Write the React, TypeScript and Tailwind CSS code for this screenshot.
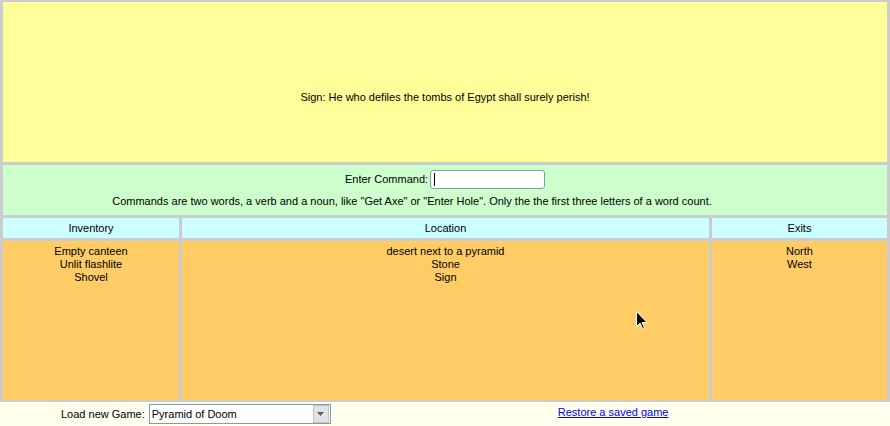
import React from 'react';

const font = { fontFamily: '"Liberation Sans", Arial, sans-serif' };

const App: React.FC = () => {
  return (
    <div className="relative w-[890px] h-[426px] bg-[#ffffee] text-[11px] leading-[13px] text-black" style={font}>
      <div className="flex flex-col gap-[3px] bg-[#cccccc] pt-[2px] pb-[2px] px-[3px]">
        <div className="h-[160px] bg-[#ffff99] flex items-center justify-center pt-[30px]">
          Sign: He who defiles the tombs of Egypt shall surely perish!
        </div>

        <div className="h-[50px] bg-[#ccffcc] flex flex-col items-center pt-[4px]">
          <div className="flex items-center gap-[2px] h-[19px] pt-[1px]">
            <span>Enter Command:</span>
            <div className="w-[115px] h-[19px] bg-white border border-[#7f9db9] rounded-[3px] flex items-center pl-[3px]">
              <div className="w-[1px] h-[13px] bg-black" />
            </div>
          </div>
          <div className="mt-[7px] mr-[66px]">
            Commands are two words, a verb and a noun, like "Get Axe" or "Enter Hole". Only the the first three letters of a word count.
          </div>
        </div>

        <div className="grid grid-cols-[176px_527px_1fr] gap-[3px] h-[20px]">
          <div className="bg-[#ccffff] flex items-center justify-center">Inventory</div>
          <div className="bg-[#ccffff] flex items-center justify-center">Location</div>
          <div className="bg-[#ccffff] flex items-center justify-center">Exits</div>
        </div>

        <div className="grid grid-cols-[176px_527px_1fr] gap-[3px] h-[159px]">
          <div className="bg-[#ffcc66] flex flex-col items-center pt-[4px]">
            <div>Empty canteen</div>
            <div>Unlit flashlite</div>
            <div>Shovel</div>
          </div>
          <div className="bg-[#ffcc66] flex flex-col items-center pt-[4px]">
            <div>desert next to a pyramid</div>
            <div>Stone</div>
            <div>Sign</div>
          </div>
          <div className="bg-[#ffcc66] flex flex-col items-center pt-[4px]">
            <div>North</div>
            <div>West</div>
          </div>
        </div>
      </div>

      <div className="flex items-center h-[24px] pl-[61px]">
        <span>Load new Game:</span>
        <div className="ml-[4px] w-[182px] h-[20px] bg-white border border-[#7f9db9] flex items-center">
          <span className="flex-1 pl-[2px]">Pyramid of Doom</span>
          <div className="w-[16px] h-[18px] mr-[1px] bg-[#e3e3e3] border border-[#c3c3c3] flex items-center justify-center">
            <svg width="7" height="4" viewBox="0 0 7 4">
              <path d="M0 0h7L3.5 4z" fill="#4d6185" />
            </svg>
          </div>
        </div>
        <a href="#" className="ml-[227px] -mt-[3px] text-[#0000ff] underline">Restore a saved game</a>
      </div>

      <svg className="absolute left-[636px] top-[311px]" width="12" height="19" viewBox="0 0 12 19">
        <path d="M0.5 0.5v15l3.5-3.5 2.5 5.5 2-1-2.5-5h5z" fill="black" stroke="white" strokeWidth="1" />
      </svg>
    </div>
  );
};

export default App;
